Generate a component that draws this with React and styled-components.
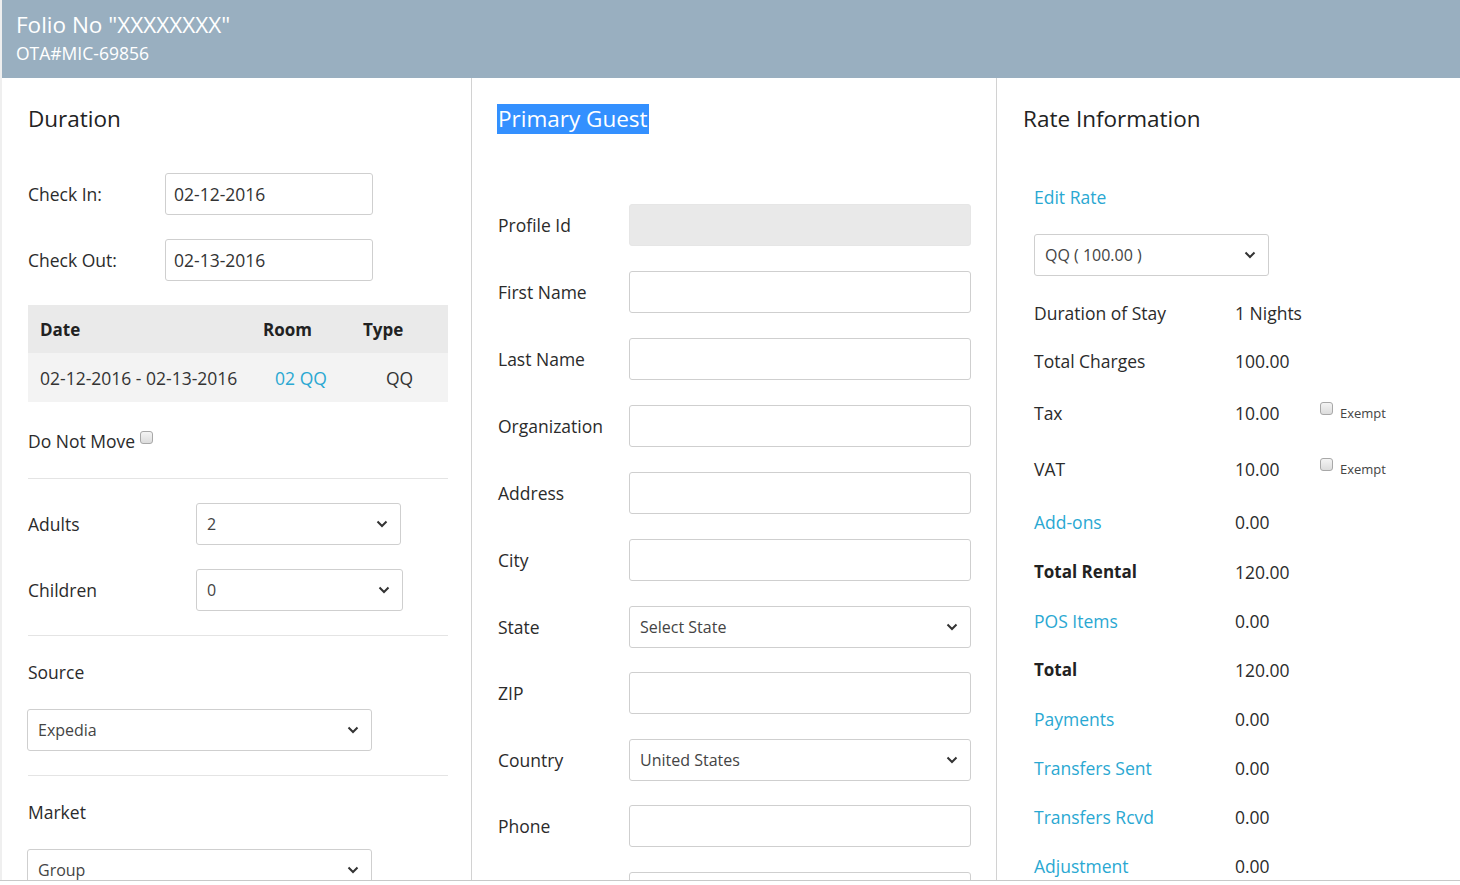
import React from 'react'
import styled, { createGlobalStyle } from 'styled-components'

const GlobalStyle = createGlobalStyle`
  * { box-sizing: border-box; }
  body {
    margin: 0;
    background: #fff;
    font-family: 'Open Sans', 'Noto Sans', sans-serif;
    color: #2b2b2b;
  }
`

const Frame = styled.div`
  height: 881px;
  overflow: hidden;
  border-bottom: 1px solid #c8c8c8;
  padding-left: 2px;
  background: #efefef;
`

const Page = styled.div`
  background: #fff;
  height: 100%;
`

const Header = styled.header`
  height: 78px;
  background: #99afc0;
  color: #fff;
  padding: 9px 14px 0;
`

const Title = styled.h1`
  margin: 0;
  font-size: 22.5px;
  font-weight: 400;
  line-height: 32px;
`

const Sub = styled.div`
  font-size: 17.5px;
  line-height: 24px;
`

const Columns = styled.div`
  display: grid;
  grid-template-columns: 469px 525px 1fr;
`

const Col = styled.section`
  padding: 26px 24px 0 26px;
  border-left: ${p => (p.$first ? 'none' : '1px solid #d2d2d2')};
  height: 802px;
`

const Heading = styled.h2`
  margin: 0;
  font-size: 22.5px;
  font-weight: 400;
  line-height: 30px;
  color: #222;
  display: inline-block;
  ${p => p.$selected && `
    background: #3390ff;
    color: #fff;
    margin-left: -1px;
    padding: 0 1px;
  `}
`

const FieldRow = styled.div`
  display: flex;
  align-items: center;
  margin-top: ${p => p.$mt || 24}px;
`

const Label = styled.label`
  width: ${p => p.$w}px;
  flex-shrink: 0;
  font-size: 17.5px;
  line-height: 24px;
`

const Input = styled.div`
  width: ${p => p.$w}px;
  height: 42px;
  border: 1px solid ${p => (p.$disabled ? '#e6e6e6' : '#cfcfcf')};
  border-radius: 3px;
  background: ${p => (p.$disabled ? '#e9e9e9' : '#fff')};
  padding: 0 8px;
  display: flex;
  align-items: center;
  font-size: 17.5px;
  color: #333;
`

const Select = styled.div`
  width: ${p => p.$w}px;
  height: 42px;
  border: 1px solid #cfcfcf;
  border-radius: 3px;
  background: #fff;
  padding: 0 12px 0 10px;
  display: flex;
  align-items: center;
  justify-content: space-between;
  font-size: 16px;
  color: #444;
  margin-left: ${p => p.$ml || 0}px;
`

const Table = styled.div`
  margin-top: 24px;
  width: 420px;
  display: grid;
  grid-template-columns: 223px 100px 97px;
`

const Th = styled.div`
  background: #eaeaea;
  height: 48px;
  padding-left: 12px;
  display: flex;
  align-items: center;
  font-weight: 700;
  font-size: 17px;
  color: #222;
`

const Td = styled.div`
  background: #f3f3f3;
  height: 49px;
  padding-left: ${p => (p.$center ? 0 : 12)}px;
  display: flex;
  align-items: center;
  justify-content: ${p => (p.$center ? 'center' : 'flex-start')};
  font-size: 17.5px;
  color: ${p => (p.$link ? '#2aa8d2' : '#333')};
`

const CheckLine = styled.div`
  margin-top: 27px;
  display: flex;
  align-items: flex-start;
  gap: 5px;
  font-size: 17.5px;
  line-height: 24px;
`

const Box = styled.span`
  display: inline-block;
  width: 13px;
  height: 13px;
  margin-top: ${p => p.$mt || 4}px;
  border: 1px solid #a8a8a8;
  border-radius: 3px;
  background: linear-gradient(#f4f4f4, #dcdcdc);
  flex-shrink: 0;
`

const Rule = styled.hr`
  margin: ${p => p.$mt || 25}px 0 0;
  width: 420px;
  border: 0;
  border-top: 1px solid #e4e4e4;
`

const Caption = styled.div`
  margin-top: 24px;
  font-size: 17.5px;
  line-height: 24px;
`

const LinkText = styled.a`
  color: #2aa8d2;
  text-decoration: none;
  font-size: 17.5px;
  line-height: 24px;
`

const RateBody = styled.div`
  padding-left: 11px;
`

const EditRate = styled.div`
  margin-top: 51px;
  height: 24px;
  display: flex;
  align-items: center;
`

const RateRow = styled.div`
  display: grid;
  grid-template-columns: 201px 85px 1fr;
  align-items: center;
  height: ${p => p.$h || 49}px;
  font-size: 17.5px;
  margin-top: ${p => p.$mt || 0}px;
`

const RateLabel = styled.div`
  font-weight: ${p => (p.$bold ? 700 : 400)};
  font-size: ${p => (p.$bold ? 17 : 17.5)}px;
  color: ${p => (p.$link ? '#2aa8d2' : p.$bold ? '#222' : '#2b2b2b')};
`

const Exempt = styled.div`
  display: flex;
  align-items: flex-start;
  gap: 7px;
  font-size: 13px;
  color: #444;
  line-height: 18px;
`

const Chevron = () => (
  <svg width="12" height="8" viewBox="0 0 12 8">
    <path d="M1.5 1.5l4.5 4.5 4.5-4.5" fill="none" stroke="#333" strokeWidth="2" />
  </svg>
)

const guestFields = [
  { name: 'Profile Id', kind: 'disabled', mt: 70 },
  { name: 'First Name' },
  { name: 'Last Name' },
  { name: 'Organization' },
  { name: 'Address' },
  { name: 'City' },
  { name: 'State', kind: 'select', text: 'Select State' },
  { name: 'ZIP', mt: 24 },
  { name: 'Country', kind: 'select', text: 'United States' },
  { name: 'Phone', mt: 24 },
  { name: '' },
]

const rates = [
  { label: 'Duration of Stay', value: '1 Nights', h: 49 },
  { label: 'Total Charges', value: '100.00', h: 48 },
  { label: 'Tax', value: '10.00', h: 56, exempt: true },
  { label: 'VAT', value: '10.00', h: 56, exempt: true },
  { label: 'Add-ons', value: '0.00', h: 50, link: true },
  { label: 'Total Rental', value: '120.00', bold: true },
  { label: 'POS Items', value: '0.00', link: true },
  { label: 'Total', value: '120.00', bold: true },
  { label: 'Payments', value: '0.00', link: true },
  { label: 'Transfers Sent', value: '0.00', link: true },
  { label: 'Transfers Rcvd', value: '0.00', link: true },
  { label: 'Adjustment', value: '0.00', link: true },
]

export default function App() {
  return (
    <>
      <GlobalStyle />
      <Frame>
        <Page>
          <Header>
            <Title>Folio No "XXXXXXXX"</Title>
            <Sub>OTA#MIC-69856</Sub>
          </Header>
          <Columns>
            <Col $first>
              <Heading>Duration</Heading>
              <FieldRow $mt={39}>
                <Label $w={137}>Check In:</Label>
                <Input $w={208}>02-12-2016</Input>
              </FieldRow>
              <FieldRow>
                <Label $w={137}>Check Out:</Label>
                <Input $w={208}>02-13-2016</Input>
              </FieldRow>
              <Table>
                <Th>Date</Th>
                <Th>Room</Th>
                <Th>Type</Th>
                <Td>02-12-2016 - 02-13-2016</Td>
                <Td $center $link>02 QQ</Td>
                <Td $center>QQ</Td>
              </Table>
              <CheckLine>
                Do Not Move <Box $mt={2} />
              </CheckLine>
              <Rule />
              <FieldRow>
                <Label $w={168}>Adults</Label>
                <Select $w={205}>2<Chevron /></Select>
              </FieldRow>
              <FieldRow>
                <Label $w={168}>Children</Label>
                <Select $w={207}>0<Chevron /></Select>
              </FieldRow>
              <Rule $mt={24} />
              <Caption>Source</Caption>
              <FieldRow $mt={25}>
                <Select $w={345} $ml={-1}>Expedia<Chevron /></Select>
              </FieldRow>
              <Rule $mt={24} />
              <Caption>Market</Caption>
              <FieldRow $mt={25}>
                <Select $w={345} $ml={-1}>Group<Chevron /></Select>
              </FieldRow>
            </Col>

            <Col>
              <Heading $selected>Primary Guest</Heading>
              {guestFields.map((f, i) => (
                <FieldRow key={i} $mt={f.mt || 25}>
                  <Label $w={131}>{f.name}</Label>
                  {f.kind === 'select' ? (
                    <Select $w={342}>{f.text}<Chevron /></Select>
                  ) : (
                    <Input $w={342} $disabled={f.kind === 'disabled'} />
                  )}
                </FieldRow>
              ))}
            </Col>

            <Col>
              <Heading>Rate Information</Heading>
              <RateBody>
                <EditRate>
                  <LinkText href="#">Edit Rate</LinkText>
                </EditRate>
                <FieldRow $mt={25}>
                  <Select $w={235}>QQ ( 100.00 )<Chevron /></Select>
                </FieldRow>
                {rates.map((r, i) => (
                  <RateRow key={r.label} $h={r.h} $mt={i === 0 ? 12 : 0}>
                    <RateLabel $bold={r.bold} $link={r.link}>{r.label}</RateLabel>
                    <div>{r.value}</div>
                    {r.exempt ? (
                      <Exempt>
                        <Box $mt={-2} />
                        Exempt
                      </Exempt>
                    ) : (
                      <span />
                    )}
                  </RateRow>
                ))}
              </RateBody>
            </Col>
          </Columns>
        </Page>
      </Frame>
    </>
  )
}
